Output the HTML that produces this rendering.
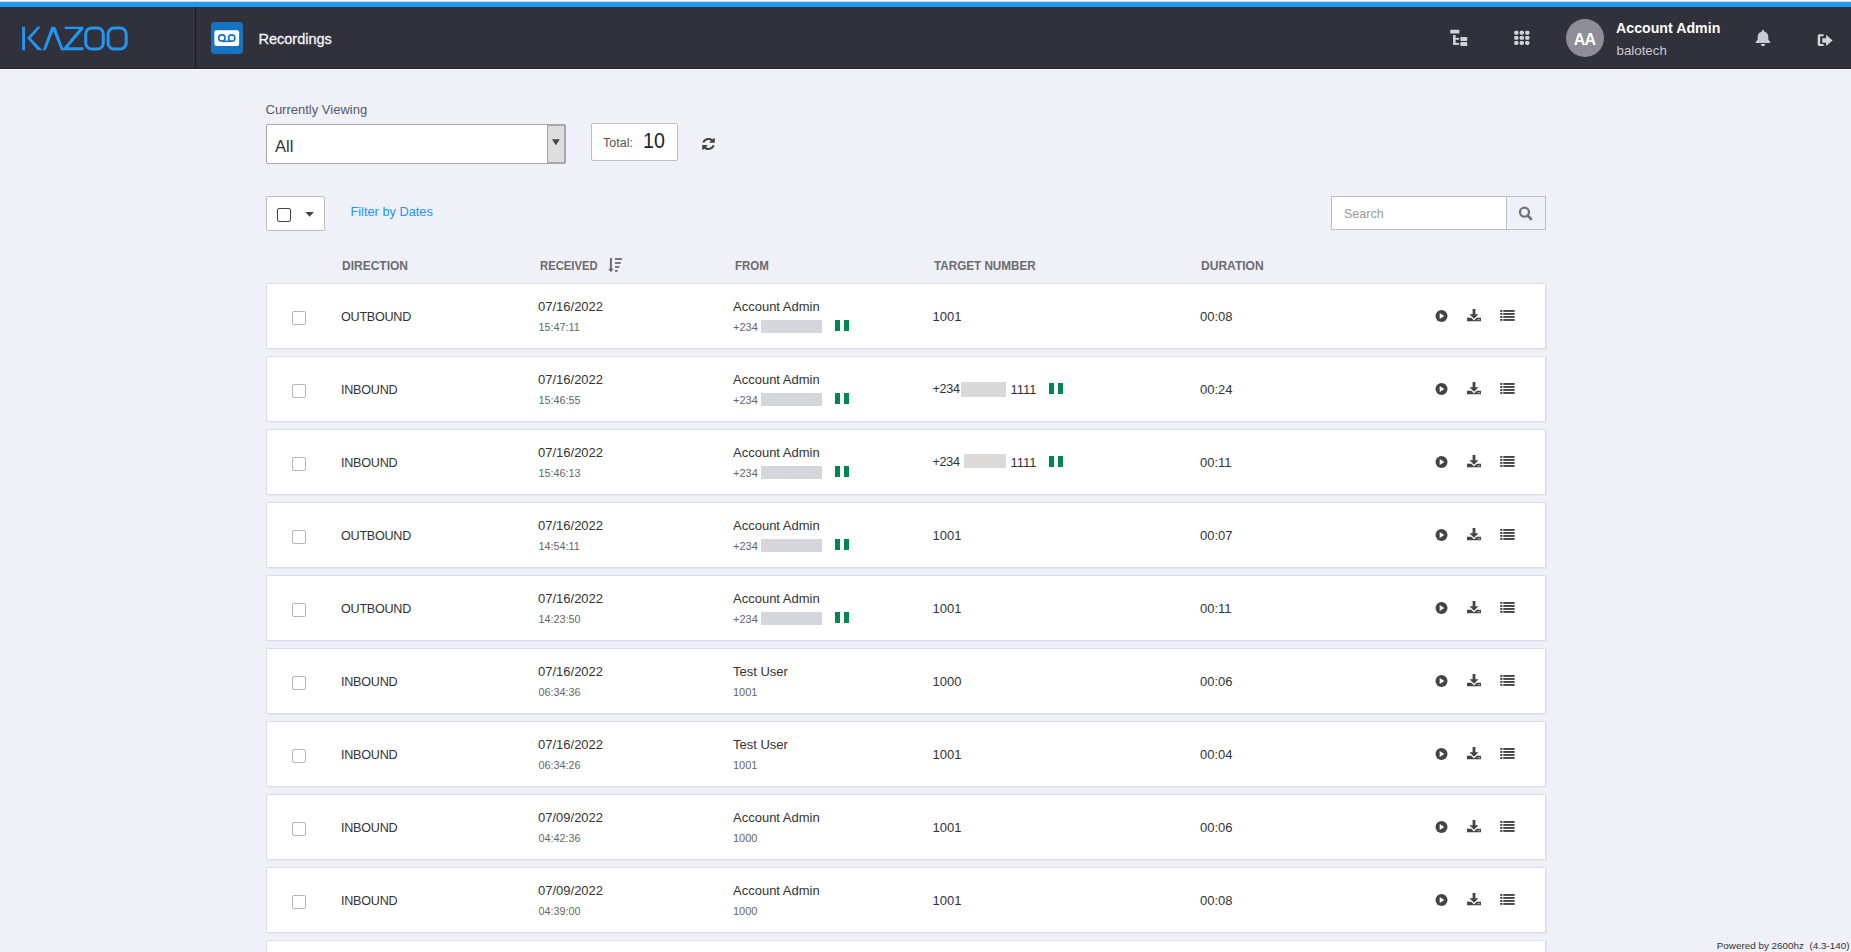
<!DOCTYPE html>
<html><head><meta charset="utf-8"><title>Recordings</title>
<style>
html,body{margin:0;padding:0}
body{width:1851px;height:952px;overflow:hidden;background:#eff0f8;position:relative;font-family:"Liberation Sans",sans-serif}
.t{position:absolute;line-height:1;white-space:nowrap}
.abs{position:absolute}
.card{position:absolute;left:266px;width:1280px;height:66px;background:#fff;border:1px solid #dcdce6;border-radius:1px;box-shadow:1px 1px 0 #e8e8f1;box-sizing:border-box}
.cb{position:absolute;width:13px;height:13px;border:1px solid #b5b5b5;border-radius:2px;box-sizing:border-box;background:#fff}
.red{position:absolute;background:#d5d6db}
</style></head><body>
<div class="abs" style="left:0;top:0;width:1851px;height:1px;background:#fff"></div><div class="abs" style="left:0;top:1px;width:1851px;height:1px;background:#ddd9d7"></div><div class="abs" style="left:0;top:2px;width:1851px;height:5px;background:#2196f3"></div><div class="abs" style="left:0;top:7px;width:1851px;height:61px;background:#31313b"></div><div class="abs" style="left:0;top:68px;width:1851px;height:1px;background:#23232c"></div><div class="abs" style="left:0;top:69px;width:1851px;height:1px;background:#fbfbfe"></div><div class="abs" style="left:195px;top:7px;width:1px;height:61px;background:#1b1b1e"></div><svg class="abs" style="left:0;top:0" width="140" height="60" viewBox="0 0 140 60">
<g fill="#2196f3">
<rect x="22.1" y="26.8" width="2.9" height="23.5"/>
<path d="M37.5 26.7H40.7L30.8 38.2L42.5 50.3H37.8L27.1 38.1z"/>
<path d="M42.8 50.3L51.4 26.8H55.3L63.9 50.3H61.0L53.3 31.2L45.7 50.3z"/>
<path d="M64.7 26.8H83.3V29.3L68.1 47.3H83.5V50.3H61.7L79.2 29.0H64.7z"/>
</g>
<g fill="none" stroke="#2196f3" stroke-width="3">
<rect x="85.7" y="28" width="17.6" height="21" rx="6"/>
<rect x="108.1" y="28" width="18.1" height="21" rx="6"/>
</g>
</svg><svg class="abs" style="left:211px;top:22px" width="32" height="32" viewBox="0 0 32 32">
<rect x="0" y="0" width="32" height="32" rx="4" fill="#1673c2"/>
<rect x="3.4" y="8.3" width="24.7" height="15.6" rx="2" fill="#fff"/>
<circle cx="10.9" cy="16.1" r="3.2" fill="none" stroke="#1673c2" stroke-width="1.6"/>
<circle cx="20.7" cy="16.1" r="3.2" fill="none" stroke="#1673c2" stroke-width="1.6"/>
<path d="M10.9 19.3H20.7" stroke="#1673c2" stroke-width="1.6"/>
</svg><div class="t" style="left:258.50px;top:31.53px;font-size:14.5px;color:#f4f4f6;font-weight:normal;-webkit-text-stroke:0.3px #f4f4f6;">Recordings</div>
<svg class="abs" style="left:1448px;top:27px" width="22" height="22" viewBox="0 0 22 22" fill="#d3d3da">
<rect x="2.3" y="2.8" width="9.1" height="3.8" rx="0.6"/>
<rect x="5.1" y="8" width="2.5" height="9.8"/>
<rect x="5.1" y="10.9" width="6" height="1.8"/>
<rect x="5.1" y="15.9" width="6" height="1.9"/>
<rect x="12.4" y="9.9" width="6.8" height="4" rx="0.6"/>
<rect x="12.4" y="15.1" width="6.8" height="3.9" rx="0.6"/>
</svg><svg class="abs" style="left:1512px;top:29px" width="20" height="20" viewBox="0 0 20 20" fill="#d3d3da"><rect x="2.20" y="1.80" width="4.2" height="3.9" rx="1.4"/><rect x="7.70" y="1.80" width="4.2" height="3.9" rx="1.4"/><rect x="13.20" y="1.80" width="4.2" height="3.9" rx="1.4"/><rect x="2.20" y="6.95" width="4.2" height="3.9" rx="1.4"/><rect x="7.70" y="6.95" width="4.2" height="3.9" rx="1.4"/><rect x="13.20" y="6.95" width="4.2" height="3.9" rx="1.4"/><rect x="2.20" y="12.10" width="4.2" height="3.9" rx="1.4"/><rect x="7.70" y="12.10" width="4.2" height="3.9" rx="1.4"/><rect x="13.20" y="12.10" width="4.2" height="3.9" rx="1.4"/></svg><div class="abs" style="left:1566px;top:19px;width:38px;height:38px;border-radius:50%;background:#8f8e97"></div><div class="t" style="left:1573.80px;top:32.16px;font-size:16px;color:#fff;font-weight:bold;letter-spacing:-0.9px">AA</div>
<div class="t" style="left:1616.00px;top:20.98px;font-size:14.2px;color:#fff;font-weight:bold;">Account Admin</div>
<div class="t" style="left:1616.50px;top:44.24px;font-size:13.3px;color:#c9c9d1;font-weight:normal;">balotech</div>
<svg class="abs" style="left:1754px;top:28px" width="18" height="20" viewBox="0 0 18 20" fill="#cbcbd5">
<path d="M9 3.4C12.6 3.4 14.3 5.9 14.3 9.2V11.1C14.3 12.1 15.2 12.9 16 13.5C16.5 13.9 16.4 14.9 15.7 14.9H2.3C1.6 14.9 1.5 13.9 2 13.5C2.8 12.9 3.7 12.1 3.7 11.1V9.2C3.7 5.9 5.4 3.4 9 3.4z"/>
<path d="M8.1 3.9V2.6C8.1 2.1 8.5 1.8 9 1.8C9.5 1.8 9.9 2.1 9.9 2.6V3.9z"/>
<path d="M6.8 15.9H11.1C11.1 17.2 10.2 18.2 9 18.2C7.8 18.2 6.8 17.2 6.8 15.9z"/>
</svg><svg class="abs" style="left:1815px;top:32px" width="20" height="16" viewBox="0 0 20 16" fill="#d3d3da">
<path d="M8.6 2.2H4.5C3.5 2.2 2.7 3 2.7 4V12.2C2.7 13.2 3.5 14 4.5 14H8.6V12H5.2V4.2H8.6z"/>
<path d="M7.3 6.2H11.1V2.7L17.6 8.4L11.1 14V10.8H7.3z"/>
</svg><div class="t" style="left:265.50px;top:102.80px;font-size:13px;color:#555a66;font-weight:normal;">Currently Viewing</div>
<div class="abs" style="left:266px;top:124px;width:300px;height:40px;box-sizing:border-box;border:1px solid #aaa;border-radius:2px;background:#fff;box-shadow:0 0 1px rgba(0,0,0,0.2)"></div><div class="abs" style="left:547px;top:125px;width:18px;height:38px;box-sizing:border-box;border:1px solid #a4a4a9;background:#dedee0"></div><svg class="abs" style="left:551px;top:138px" width="10" height="8" viewBox="0 0 10 8"><path d="M1 1.3H8.8L4.9 7.2z" fill="#444"/></svg><div class="t" style="left:275.00px;top:137.93px;font-size:16.5px;color:#333;font-weight:normal;">All</div>
<div class="abs" style="left:591px;top:123px;width:87px;height:38px;box-sizing:border-box;border:1px solid #bdbdc2;border-radius:2px;background:#fff"></div><div class="t" style="left:603.00px;top:136.82px;font-size:12.5px;color:#555;font-weight:normal;">Total:</div>
<div class="t" style="left:643.20px;top:129.58px;font-size:22px;color:#222;font-weight:normal;transform:scaleX(0.8927);transform-origin:0 0;">10</div>
<svg class="abs" style="left:699.8px;top:136px" width="17.4" height="15.4" viewBox="0 0 16 16" preserveAspectRatio="none" fill="#444">
<path d="M13.6 2.6v3.9c0 0.3-0.2 0.5-0.5 0.5H9.2c-0.4 0-0.6-0.5-0.3-0.8l1.2-1.2C9.4 4.4 8.6 4.1 7.8 4.1c-1.6 0-3 1-3.5 2.5c0 0.1-0.1 0.2-0.2 0.2H2.4c-0.1 0-0.2-0.1-0.2-0.3C2.7 3.8 5 2 7.8 2c1.4 0 2.7 0.5 3.8 1.4l1.2-1.1c0.3-0.3 0.8-0.1 0.8 0.3z"/>
<path d="M2 13.8V9.9c0-0.3 0.2-0.5 0.5-0.5h3.9c0.4 0 0.6 0.5 0.3 0.8l-1.2 1.2c0.7 0.7 1.5 1 2.3 1c1.6 0 3-1 3.5-2.5c0-0.1 0.1-0.2 0.2-0.2h1.7c0.1 0 0.2 0.1 0.2 0.3c-0.5 2.8-2.8 4.6-5.6 4.6c-1.4 0-2.7-0.5-3.8-1.4l-1.2 1.1C2.5 14.4 2 14.2 2 13.8z"/>
</svg><div class="abs" style="left:266px;top:196px;width:59px;height:35px;box-sizing:border-box;border:1px solid #bdbdc2;border-radius:2px;background:#fff"></div><div class="abs" style="left:277px;top:208px;width:14px;height:14px;box-sizing:border-box;border:1.5px solid #444;border-radius:2px"></div><svg class="abs" style="left:304px;top:211px" width="11" height="7" viewBox="0 0 11 7"><path d="M1.3 1H9.9L5.6 5.7z" fill="#444"/></svg><div class="t" style="left:350.40px;top:206.16px;font-size:12.8px;color:#2196f3;font-weight:normal;">Filter by Dates</div>
<div class="abs" style="left:1331px;top:196px;width:215px;height:34px;box-sizing:border-box;border:1px solid #bdbdc2;background:#fff"></div><div class="abs" style="left:1506px;top:196px;width:40px;height:34px;box-sizing:border-box;border:1px solid #bdbdc2;background:#eff0f8"></div><div class="t" style="left:1344.00px;top:208.22px;font-size:12.5px;color:#9a9a9a;font-weight:normal;">Search</div>
<svg class="abs" style="left:1517px;top:205px" width="17" height="17" viewBox="0 0 17 17">
<circle cx="7.5" cy="7.2" r="4.5" fill="none" stroke="#727272" stroke-width="2.3"/>
<path d="M10.6 10.5L14.1 14" stroke="#727272" stroke-width="2.5" stroke-linecap="round"/>
</svg><div class="t" style="left:341.80px;top:259.63px;font-size:12.6px;color:#6b6b6f;font-weight:bold;transform:scaleX(0.9524);transform-origin:0 0;">DIRECTION</div>
<div class="t" style="left:539.80px;top:259.63px;font-size:12.6px;color:#6b6b6f;font-weight:bold;transform:scaleX(0.8937);transform-origin:0 0;">RECEIVED</div>
<svg class="abs" style="left:606px;top:256px" width="18" height="18" viewBox="0 0 18 18" fill="#6b6b6f">
<rect x="3.9" y="2" width="2" height="12"/>
<path d="M2.1 12.8H7.7L4.9 16.3z"/>
<rect x="9" y="2.1" width="7" height="1.8"/>
<rect x="9" y="6.1" width="5.8" height="1.8"/>
<rect x="9" y="10" width="4.3" height="1.8"/>
<rect x="9" y="13.9" width="2.7" height="1.8"/>
</svg><div class="t" style="left:734.50px;top:259.63px;font-size:12.6px;color:#6b6b6f;font-weight:bold;transform:scaleX(0.9136);transform-origin:0 0;">FROM</div>
<div class="t" style="left:933.90px;top:259.63px;font-size:12.6px;color:#6b6b6f;font-weight:bold;transform:scaleX(0.9272);transform-origin:0 0;">TARGET NUMBER</div>
<div class="t" style="left:1201.00px;top:259.63px;font-size:12.6px;color:#6b6b6f;font-weight:bold;transform:scaleX(0.9560);transform-origin:0 0;">DURATION</div>
<div class="card" style="top:283px"></div><div class="cb" style="left:292px;top:311px;width:14px;height:14px"></div><div class="t" style="left:341.00px;top:311.03px;font-size:12.6px;color:#333;font-weight:normal;letter-spacing:-0.25px">OUTBOUND</div>
<div class="t" style="left:538.00px;top:300.00px;font-size:13px;color:#333;font-weight:normal;">07/16/2022</div>
<div class="t" style="left:538.50px;top:321.86px;font-size:10.8px;color:#666;font-weight:normal;">15:47:11</div>
<div class="t" style="left:733.00px;top:299.80px;font-size:13px;color:#333;font-weight:normal;">Account Admin</div>
<div class="t" style="left:733.00px;top:321.69px;font-size:11px;color:#666;font-weight:normal;">+234</div>
<div class="red" style="left:761px;top:320px;width:61px;height:13px"></div><div class="abs" style="left:835px;top:320px;width:5px;height:11px;background:#008751"></div><div class="abs" style="left:844px;top:320px;width:5px;height:11px;background:#008751"></div><div class="t" style="left:932.50px;top:310.00px;font-size:13px;color:#333;font-weight:normal;">1001</div>
<div class="t" style="left:1200.00px;top:310.00px;font-size:13px;color:#333;font-weight:normal;">00:08</div>
<svg class="abs" style="left:1433px;top:308px" width="16" height="16" viewBox="0 0 16 16">
<circle cx="8.5" cy="8" r="6" fill="#444"/><path d="M6.7 5.1L11.3 8L6.7 10.9z" fill="#fff"/></svg><svg class="abs" style="left:1465px;top:308px" width="18" height="18" viewBox="0 0 18 18" fill="#444">
<rect x="7.6" y="1" width="2.8" height="6"/><path d="M4.5 6.2H13.5L9 10.8z"/>
<path d="M2 9.8H6.3L9 12.5L11.7 9.8H16V13.2H2z"/><rect x="12.6" y="11.3" width="0.9" height="0.9" fill="#fff"/><rect x="14.2" y="11.3" width="0.9" height="0.9" fill="#fff"/></svg><svg class="abs" style="left:1498px;top:308px" width="20" height="18" viewBox="0 0 20 18" fill="#444">
<rect x="2.2" y="2" width="2.2" height="1.9"/><rect x="5.3" y="2" width="11.3" height="1.9"/>
<rect x="2.2" y="5" width="2.2" height="1.9"/><rect x="5.3" y="5" width="11.3" height="1.9"/>
<rect x="2.2" y="8" width="2.2" height="1.9"/><rect x="5.3" y="8" width="11.3" height="1.9"/>
<rect x="2.2" y="11" width="2.2" height="1.9"/><rect x="5.3" y="11" width="11.3" height="1.9"/></svg><div class="card" style="top:356px"></div><div class="cb" style="left:292px;top:384px;width:14px;height:14px"></div><div class="t" style="left:341.00px;top:384.03px;font-size:12.6px;color:#333;font-weight:normal;letter-spacing:-0.25px">INBOUND</div>
<div class="t" style="left:538.00px;top:373.00px;font-size:13px;color:#333;font-weight:normal;">07/16/2022</div>
<div class="t" style="left:538.50px;top:394.86px;font-size:10.8px;color:#666;font-weight:normal;">15:46:55</div>
<div class="t" style="left:733.00px;top:372.80px;font-size:13px;color:#333;font-weight:normal;">Account Admin</div>
<div class="t" style="left:733.00px;top:394.69px;font-size:11px;color:#666;font-weight:normal;">+234</div>
<div class="red" style="left:761px;top:393px;width:61px;height:13px"></div><div class="abs" style="left:835px;top:393px;width:5px;height:11px;background:#008751"></div><div class="abs" style="left:844px;top:393px;width:5px;height:11px;background:#008751"></div><div class="t" style="left:932.50px;top:383.33px;font-size:12.6px;color:#333;font-weight:normal;letter-spacing:-0.3px">+234</div>
<div class="red" style="left:961px;top:382px;width:45px;height:15px;background:#d9d9d9"></div><div class="t" style="left:1010.50px;top:383.00px;font-size:13px;color:#333;font-weight:normal;">1111</div>
<div class="abs" style="left:1049px;top:383px;width:5px;height:11px;background:#008751"></div><div class="abs" style="left:1058px;top:383px;width:5px;height:11px;background:#008751"></div><div class="t" style="left:1200.00px;top:383.00px;font-size:13px;color:#333;font-weight:normal;">00:24</div>
<svg class="abs" style="left:1433px;top:381px" width="16" height="16" viewBox="0 0 16 16">
<circle cx="8.5" cy="8" r="6" fill="#444"/><path d="M6.7 5.1L11.3 8L6.7 10.9z" fill="#fff"/></svg><svg class="abs" style="left:1465px;top:381px" width="18" height="18" viewBox="0 0 18 18" fill="#444">
<rect x="7.6" y="1" width="2.8" height="6"/><path d="M4.5 6.2H13.5L9 10.8z"/>
<path d="M2 9.8H6.3L9 12.5L11.7 9.8H16V13.2H2z"/><rect x="12.6" y="11.3" width="0.9" height="0.9" fill="#fff"/><rect x="14.2" y="11.3" width="0.9" height="0.9" fill="#fff"/></svg><svg class="abs" style="left:1498px;top:381px" width="20" height="18" viewBox="0 0 20 18" fill="#444">
<rect x="2.2" y="2" width="2.2" height="1.9"/><rect x="5.3" y="2" width="11.3" height="1.9"/>
<rect x="2.2" y="5" width="2.2" height="1.9"/><rect x="5.3" y="5" width="11.3" height="1.9"/>
<rect x="2.2" y="8" width="2.2" height="1.9"/><rect x="5.3" y="8" width="11.3" height="1.9"/>
<rect x="2.2" y="11" width="2.2" height="1.9"/><rect x="5.3" y="11" width="11.3" height="1.9"/></svg><div class="card" style="top:429px"></div><div class="cb" style="left:292px;top:457px;width:14px;height:14px"></div><div class="t" style="left:341.00px;top:457.03px;font-size:12.6px;color:#333;font-weight:normal;letter-spacing:-0.25px">INBOUND</div>
<div class="t" style="left:538.00px;top:446.00px;font-size:13px;color:#333;font-weight:normal;">07/16/2022</div>
<div class="t" style="left:538.50px;top:467.86px;font-size:10.8px;color:#666;font-weight:normal;">15:46:13</div>
<div class="t" style="left:733.00px;top:445.80px;font-size:13px;color:#333;font-weight:normal;">Account Admin</div>
<div class="t" style="left:733.00px;top:467.69px;font-size:11px;color:#666;font-weight:normal;">+234</div>
<div class="red" style="left:761px;top:466px;width:61px;height:13px"></div><div class="abs" style="left:835px;top:466px;width:5px;height:11px;background:#008751"></div><div class="abs" style="left:844px;top:466px;width:5px;height:11px;background:#008751"></div><div class="t" style="left:932.50px;top:456.33px;font-size:12.6px;color:#333;font-weight:normal;letter-spacing:-0.3px">+234</div>
<div class="red" style="left:964px;top:454px;width:42px;height:14px;background:#dbdad8"></div><div class="t" style="left:1010.50px;top:456.00px;font-size:13px;color:#333;font-weight:normal;">1111</div>
<div class="abs" style="left:1049px;top:456px;width:5px;height:11px;background:#008751"></div><div class="abs" style="left:1058px;top:456px;width:5px;height:11px;background:#008751"></div><div class="t" style="left:1200.00px;top:456.00px;font-size:13px;color:#333;font-weight:normal;">00:11</div>
<svg class="abs" style="left:1433px;top:454px" width="16" height="16" viewBox="0 0 16 16">
<circle cx="8.5" cy="8" r="6" fill="#444"/><path d="M6.7 5.1L11.3 8L6.7 10.9z" fill="#fff"/></svg><svg class="abs" style="left:1465px;top:454px" width="18" height="18" viewBox="0 0 18 18" fill="#444">
<rect x="7.6" y="1" width="2.8" height="6"/><path d="M4.5 6.2H13.5L9 10.8z"/>
<path d="M2 9.8H6.3L9 12.5L11.7 9.8H16V13.2H2z"/><rect x="12.6" y="11.3" width="0.9" height="0.9" fill="#fff"/><rect x="14.2" y="11.3" width="0.9" height="0.9" fill="#fff"/></svg><svg class="abs" style="left:1498px;top:454px" width="20" height="18" viewBox="0 0 20 18" fill="#444">
<rect x="2.2" y="2" width="2.2" height="1.9"/><rect x="5.3" y="2" width="11.3" height="1.9"/>
<rect x="2.2" y="5" width="2.2" height="1.9"/><rect x="5.3" y="5" width="11.3" height="1.9"/>
<rect x="2.2" y="8" width="2.2" height="1.9"/><rect x="5.3" y="8" width="11.3" height="1.9"/>
<rect x="2.2" y="11" width="2.2" height="1.9"/><rect x="5.3" y="11" width="11.3" height="1.9"/></svg><div class="card" style="top:502px"></div><div class="cb" style="left:292px;top:530px;width:14px;height:14px"></div><div class="t" style="left:341.00px;top:530.03px;font-size:12.6px;color:#333;font-weight:normal;letter-spacing:-0.25px">OUTBOUND</div>
<div class="t" style="left:538.00px;top:519.00px;font-size:13px;color:#333;font-weight:normal;">07/16/2022</div>
<div class="t" style="left:538.50px;top:540.86px;font-size:10.8px;color:#666;font-weight:normal;">14:54:11</div>
<div class="t" style="left:733.00px;top:518.80px;font-size:13px;color:#333;font-weight:normal;">Account Admin</div>
<div class="t" style="left:733.00px;top:540.69px;font-size:11px;color:#666;font-weight:normal;">+234</div>
<div class="red" style="left:761px;top:539px;width:61px;height:13px"></div><div class="abs" style="left:835px;top:539px;width:5px;height:11px;background:#008751"></div><div class="abs" style="left:844px;top:539px;width:5px;height:11px;background:#008751"></div><div class="t" style="left:932.50px;top:529.00px;font-size:13px;color:#333;font-weight:normal;">1001</div>
<div class="t" style="left:1200.00px;top:529.00px;font-size:13px;color:#333;font-weight:normal;">00:07</div>
<svg class="abs" style="left:1433px;top:527px" width="16" height="16" viewBox="0 0 16 16">
<circle cx="8.5" cy="8" r="6" fill="#444"/><path d="M6.7 5.1L11.3 8L6.7 10.9z" fill="#fff"/></svg><svg class="abs" style="left:1465px;top:527px" width="18" height="18" viewBox="0 0 18 18" fill="#444">
<rect x="7.6" y="1" width="2.8" height="6"/><path d="M4.5 6.2H13.5L9 10.8z"/>
<path d="M2 9.8H6.3L9 12.5L11.7 9.8H16V13.2H2z"/><rect x="12.6" y="11.3" width="0.9" height="0.9" fill="#fff"/><rect x="14.2" y="11.3" width="0.9" height="0.9" fill="#fff"/></svg><svg class="abs" style="left:1498px;top:527px" width="20" height="18" viewBox="0 0 20 18" fill="#444">
<rect x="2.2" y="2" width="2.2" height="1.9"/><rect x="5.3" y="2" width="11.3" height="1.9"/>
<rect x="2.2" y="5" width="2.2" height="1.9"/><rect x="5.3" y="5" width="11.3" height="1.9"/>
<rect x="2.2" y="8" width="2.2" height="1.9"/><rect x="5.3" y="8" width="11.3" height="1.9"/>
<rect x="2.2" y="11" width="2.2" height="1.9"/><rect x="5.3" y="11" width="11.3" height="1.9"/></svg><div class="card" style="top:575px"></div><div class="cb" style="left:292px;top:603px;width:14px;height:14px"></div><div class="t" style="left:341.00px;top:603.03px;font-size:12.6px;color:#333;font-weight:normal;letter-spacing:-0.25px">OUTBOUND</div>
<div class="t" style="left:538.00px;top:592.00px;font-size:13px;color:#333;font-weight:normal;">07/16/2022</div>
<div class="t" style="left:538.50px;top:613.86px;font-size:10.8px;color:#666;font-weight:normal;">14:23:50</div>
<div class="t" style="left:733.00px;top:591.80px;font-size:13px;color:#333;font-weight:normal;">Account Admin</div>
<div class="t" style="left:733.00px;top:613.69px;font-size:11px;color:#666;font-weight:normal;">+234</div>
<div class="red" style="left:761px;top:612px;width:61px;height:13px"></div><div class="abs" style="left:835px;top:612px;width:5px;height:11px;background:#008751"></div><div class="abs" style="left:844px;top:612px;width:5px;height:11px;background:#008751"></div><div class="t" style="left:932.50px;top:602.00px;font-size:13px;color:#333;font-weight:normal;">1001</div>
<div class="t" style="left:1200.00px;top:602.00px;font-size:13px;color:#333;font-weight:normal;">00:11</div>
<svg class="abs" style="left:1433px;top:600px" width="16" height="16" viewBox="0 0 16 16">
<circle cx="8.5" cy="8" r="6" fill="#444"/><path d="M6.7 5.1L11.3 8L6.7 10.9z" fill="#fff"/></svg><svg class="abs" style="left:1465px;top:600px" width="18" height="18" viewBox="0 0 18 18" fill="#444">
<rect x="7.6" y="1" width="2.8" height="6"/><path d="M4.5 6.2H13.5L9 10.8z"/>
<path d="M2 9.8H6.3L9 12.5L11.7 9.8H16V13.2H2z"/><rect x="12.6" y="11.3" width="0.9" height="0.9" fill="#fff"/><rect x="14.2" y="11.3" width="0.9" height="0.9" fill="#fff"/></svg><svg class="abs" style="left:1498px;top:600px" width="20" height="18" viewBox="0 0 20 18" fill="#444">
<rect x="2.2" y="2" width="2.2" height="1.9"/><rect x="5.3" y="2" width="11.3" height="1.9"/>
<rect x="2.2" y="5" width="2.2" height="1.9"/><rect x="5.3" y="5" width="11.3" height="1.9"/>
<rect x="2.2" y="8" width="2.2" height="1.9"/><rect x="5.3" y="8" width="11.3" height="1.9"/>
<rect x="2.2" y="11" width="2.2" height="1.9"/><rect x="5.3" y="11" width="11.3" height="1.9"/></svg><div class="card" style="top:648px"></div><div class="cb" style="left:292px;top:676px;width:14px;height:14px"></div><div class="t" style="left:341.00px;top:676.03px;font-size:12.6px;color:#333;font-weight:normal;letter-spacing:-0.25px">INBOUND</div>
<div class="t" style="left:538.00px;top:665.00px;font-size:13px;color:#333;font-weight:normal;">07/16/2022</div>
<div class="t" style="left:538.50px;top:686.86px;font-size:10.8px;color:#666;font-weight:normal;">06:34:36</div>
<div class="t" style="left:733.00px;top:664.80px;font-size:13px;color:#333;font-weight:normal;">Test User</div>
<div class="t" style="left:733.00px;top:686.69px;font-size:11px;color:#666;font-weight:normal;">1001</div>
<div class="t" style="left:932.50px;top:675.00px;font-size:13px;color:#333;font-weight:normal;">1000</div>
<div class="t" style="left:1200.00px;top:675.00px;font-size:13px;color:#333;font-weight:normal;">00:06</div>
<svg class="abs" style="left:1433px;top:673px" width="16" height="16" viewBox="0 0 16 16">
<circle cx="8.5" cy="8" r="6" fill="#444"/><path d="M6.7 5.1L11.3 8L6.7 10.9z" fill="#fff"/></svg><svg class="abs" style="left:1465px;top:673px" width="18" height="18" viewBox="0 0 18 18" fill="#444">
<rect x="7.6" y="1" width="2.8" height="6"/><path d="M4.5 6.2H13.5L9 10.8z"/>
<path d="M2 9.8H6.3L9 12.5L11.7 9.8H16V13.2H2z"/><rect x="12.6" y="11.3" width="0.9" height="0.9" fill="#fff"/><rect x="14.2" y="11.3" width="0.9" height="0.9" fill="#fff"/></svg><svg class="abs" style="left:1498px;top:673px" width="20" height="18" viewBox="0 0 20 18" fill="#444">
<rect x="2.2" y="2" width="2.2" height="1.9"/><rect x="5.3" y="2" width="11.3" height="1.9"/>
<rect x="2.2" y="5" width="2.2" height="1.9"/><rect x="5.3" y="5" width="11.3" height="1.9"/>
<rect x="2.2" y="8" width="2.2" height="1.9"/><rect x="5.3" y="8" width="11.3" height="1.9"/>
<rect x="2.2" y="11" width="2.2" height="1.9"/><rect x="5.3" y="11" width="11.3" height="1.9"/></svg><div class="card" style="top:721px"></div><div class="cb" style="left:292px;top:749px;width:14px;height:14px"></div><div class="t" style="left:341.00px;top:749.03px;font-size:12.6px;color:#333;font-weight:normal;letter-spacing:-0.25px">INBOUND</div>
<div class="t" style="left:538.00px;top:738.00px;font-size:13px;color:#333;font-weight:normal;">07/16/2022</div>
<div class="t" style="left:538.50px;top:759.86px;font-size:10.8px;color:#666;font-weight:normal;">06:34:26</div>
<div class="t" style="left:733.00px;top:737.80px;font-size:13px;color:#333;font-weight:normal;">Test User</div>
<div class="t" style="left:733.00px;top:759.69px;font-size:11px;color:#666;font-weight:normal;">1001</div>
<div class="t" style="left:932.50px;top:748.00px;font-size:13px;color:#333;font-weight:normal;">1001</div>
<div class="t" style="left:1200.00px;top:748.00px;font-size:13px;color:#333;font-weight:normal;">00:04</div>
<svg class="abs" style="left:1433px;top:746px" width="16" height="16" viewBox="0 0 16 16">
<circle cx="8.5" cy="8" r="6" fill="#444"/><path d="M6.7 5.1L11.3 8L6.7 10.9z" fill="#fff"/></svg><svg class="abs" style="left:1465px;top:746px" width="18" height="18" viewBox="0 0 18 18" fill="#444">
<rect x="7.6" y="1" width="2.8" height="6"/><path d="M4.5 6.2H13.5L9 10.8z"/>
<path d="M2 9.8H6.3L9 12.5L11.7 9.8H16V13.2H2z"/><rect x="12.6" y="11.3" width="0.9" height="0.9" fill="#fff"/><rect x="14.2" y="11.3" width="0.9" height="0.9" fill="#fff"/></svg><svg class="abs" style="left:1498px;top:746px" width="20" height="18" viewBox="0 0 20 18" fill="#444">
<rect x="2.2" y="2" width="2.2" height="1.9"/><rect x="5.3" y="2" width="11.3" height="1.9"/>
<rect x="2.2" y="5" width="2.2" height="1.9"/><rect x="5.3" y="5" width="11.3" height="1.9"/>
<rect x="2.2" y="8" width="2.2" height="1.9"/><rect x="5.3" y="8" width="11.3" height="1.9"/>
<rect x="2.2" y="11" width="2.2" height="1.9"/><rect x="5.3" y="11" width="11.3" height="1.9"/></svg><div class="card" style="top:794px"></div><div class="cb" style="left:292px;top:822px;width:14px;height:14px"></div><div class="t" style="left:341.00px;top:822.03px;font-size:12.6px;color:#333;font-weight:normal;letter-spacing:-0.25px">INBOUND</div>
<div class="t" style="left:538.00px;top:811.00px;font-size:13px;color:#333;font-weight:normal;">07/09/2022</div>
<div class="t" style="left:538.50px;top:832.86px;font-size:10.8px;color:#666;font-weight:normal;">04:42:36</div>
<div class="t" style="left:733.00px;top:810.80px;font-size:13px;color:#333;font-weight:normal;">Account Admin</div>
<div class="t" style="left:733.00px;top:832.69px;font-size:11px;color:#666;font-weight:normal;">1000</div>
<div class="t" style="left:932.50px;top:821.00px;font-size:13px;color:#333;font-weight:normal;">1001</div>
<div class="t" style="left:1200.00px;top:821.00px;font-size:13px;color:#333;font-weight:normal;">00:06</div>
<svg class="abs" style="left:1433px;top:819px" width="16" height="16" viewBox="0 0 16 16">
<circle cx="8.5" cy="8" r="6" fill="#444"/><path d="M6.7 5.1L11.3 8L6.7 10.9z" fill="#fff"/></svg><svg class="abs" style="left:1465px;top:819px" width="18" height="18" viewBox="0 0 18 18" fill="#444">
<rect x="7.6" y="1" width="2.8" height="6"/><path d="M4.5 6.2H13.5L9 10.8z"/>
<path d="M2 9.8H6.3L9 12.5L11.7 9.8H16V13.2H2z"/><rect x="12.6" y="11.3" width="0.9" height="0.9" fill="#fff"/><rect x="14.2" y="11.3" width="0.9" height="0.9" fill="#fff"/></svg><svg class="abs" style="left:1498px;top:819px" width="20" height="18" viewBox="0 0 20 18" fill="#444">
<rect x="2.2" y="2" width="2.2" height="1.9"/><rect x="5.3" y="2" width="11.3" height="1.9"/>
<rect x="2.2" y="5" width="2.2" height="1.9"/><rect x="5.3" y="5" width="11.3" height="1.9"/>
<rect x="2.2" y="8" width="2.2" height="1.9"/><rect x="5.3" y="8" width="11.3" height="1.9"/>
<rect x="2.2" y="11" width="2.2" height="1.9"/><rect x="5.3" y="11" width="11.3" height="1.9"/></svg><div class="card" style="top:867px"></div><div class="cb" style="left:292px;top:895px;width:14px;height:14px"></div><div class="t" style="left:341.00px;top:895.03px;font-size:12.6px;color:#333;font-weight:normal;letter-spacing:-0.25px">INBOUND</div>
<div class="t" style="left:538.00px;top:884.00px;font-size:13px;color:#333;font-weight:normal;">07/09/2022</div>
<div class="t" style="left:538.50px;top:905.86px;font-size:10.8px;color:#666;font-weight:normal;">04:39:00</div>
<div class="t" style="left:733.00px;top:883.80px;font-size:13px;color:#333;font-weight:normal;">Account Admin</div>
<div class="t" style="left:733.00px;top:905.69px;font-size:11px;color:#666;font-weight:normal;">1000</div>
<div class="t" style="left:932.50px;top:894.00px;font-size:13px;color:#333;font-weight:normal;">1001</div>
<div class="t" style="left:1200.00px;top:894.00px;font-size:13px;color:#333;font-weight:normal;">00:08</div>
<svg class="abs" style="left:1433px;top:892px" width="16" height="16" viewBox="0 0 16 16">
<circle cx="8.5" cy="8" r="6" fill="#444"/><path d="M6.7 5.1L11.3 8L6.7 10.9z" fill="#fff"/></svg><svg class="abs" style="left:1465px;top:892px" width="18" height="18" viewBox="0 0 18 18" fill="#444">
<rect x="7.6" y="1" width="2.8" height="6"/><path d="M4.5 6.2H13.5L9 10.8z"/>
<path d="M2 9.8H6.3L9 12.5L11.7 9.8H16V13.2H2z"/><rect x="12.6" y="11.3" width="0.9" height="0.9" fill="#fff"/><rect x="14.2" y="11.3" width="0.9" height="0.9" fill="#fff"/></svg><svg class="abs" style="left:1498px;top:892px" width="20" height="18" viewBox="0 0 20 18" fill="#444">
<rect x="2.2" y="2" width="2.2" height="1.9"/><rect x="5.3" y="2" width="11.3" height="1.9"/>
<rect x="2.2" y="5" width="2.2" height="1.9"/><rect x="5.3" y="5" width="11.3" height="1.9"/>
<rect x="2.2" y="8" width="2.2" height="1.9"/><rect x="5.3" y="8" width="11.3" height="1.9"/>
<rect x="2.2" y="11" width="2.2" height="1.9"/><rect x="5.3" y="11" width="11.3" height="1.9"/></svg><div class="card" style="top:940px"></div><div class="t" style="left:1716.70px;top:940.72px;font-size:9.9px;color:#333;font-weight:normal;">Powered by 2600hz&nbsp;&nbsp;(4.3-140)</div>
</body></html>
